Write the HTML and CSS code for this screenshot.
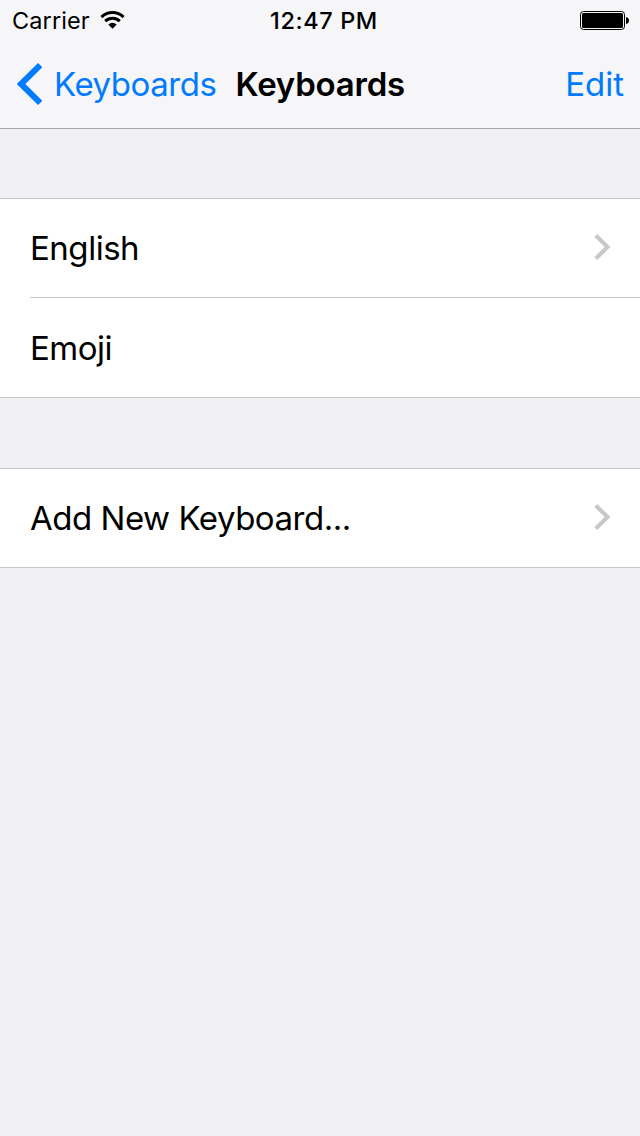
FILE: index.html
```html
<!DOCTYPE html>
<html lang="en">
<head>
<meta charset="utf-8">
<title>Keyboards</title>
<link rel="stylesheet" href="styles.css">
</head>
<body>
<header class="top">
  <div class="status">
    <div class="status-left">
      <span class="carrier">Carrier</span>
      <svg class="wifi" width="25" height="18" viewBox="0 0 25 18"><path d="M1.4 6.2Q6.2 1.6 12.5 1.6T23.6 6.2" fill="none" stroke="#000" stroke-width="3"/><path d="M5.2 10.2Q8.4 7.3 12.5 7.3T19.8 10.2" fill="none" stroke="#000" stroke-width="3"/><path d="M8.3 13.5Q12.5 9.8 16.7 13.5L12.5 17.8Z"/></svg>
    </div>
    <span class="time">12:47 PM</span>
    <svg class="battery" width="50" height="19" viewBox="0 0 50 19"><rect x=".5" y=".5" width="44" height="18" rx="3" fill="none" stroke="#000"/><rect x="2" y="2" width="41" height="15" rx="1.5"/><path d="M46 6Q49 6.5 49 9.5T46 13Z"/></svg>
  </div>
  <nav class="nav">
    <a class="back"><svg class="back-icon" width="26" height="42" viewBox="0 0 26 42"><path d="M23.2 2.2L4 21L23.2 39.8" fill="none" stroke="#007aff" stroke-width="6"/></svg><span class="back-label">Keyboards</span></a>
    <h1 class="title">Keyboards</h1>
    <a class="edit">Edit</a>
  </nav>
</header>
<main class="content">
  <section class="group">
    <div class="row"><span class="label">English</span><svg class="chevron" width="17" height="26" viewBox="0 0 17 26"><path d="M1.8 1.5L13.6 13L1.8 24.5" fill="none" stroke="#c7c7cc" stroke-width="4"/></svg></div>
    <div class="row divided"><span class="label">Emoji</span></div>
  </section>
  <section class="group">
    <div class="row"><span class="label">Add New Keyboard...</span><svg class="chevron" width="17" height="26" viewBox="0 0 17 26"><path d="M1.8 1.5L13.6 13L1.8 24.5" fill="none" stroke="#c7c7cc" stroke-width="4"/></svg></div>
  </section>
</main>
</body>
</html>
```
FILE: styles.css
```css
* { box-sizing: border-box; }
body { margin: 0; min-height: 1136px; background: #efeff4; color: #000; font-family: Inter, "Liberation Sans", sans-serif; }
svg { display: block; flex: none; }
span, h1, a { white-space: nowrap; }
.top { height: 129px; background: #f6f6f8; border-bottom: 1px solid #a7a7aa; }
.status { height: 41px; display: grid; grid-template-columns: 1fr auto 1fr; align-items: center; padding: 0 10px 0 12px; font-size: 23.5px; line-height: 41px; }
.status-left { display: flex; align-items: center; gap: 10px; }
.carrier { letter-spacing: .1px; }
.wifi { margin-top: -1px; }
.time { padding-left: 6px; font-weight: 550; font-size: 23.5px; letter-spacing: .6px; }
.battery { justify-self: end; }
.nav { height: 87px; display: flex; align-items: center; padding: 0 16px 1px 17px; font-size: 33px; line-height: 86px; letter-spacing: -.45px; }
.back { display: flex; align-items: center; gap: 11px; color: #007aff; }
.back-icon { margin-top: -1px; }
.title { margin: 0 0 0 19px; font-size: 33px; font-weight: 600; letter-spacing: -.2px; }
.edit { margin-left: auto; color: #007aff; letter-spacing: 0; }
.content { padding-top: 69px; display: flex; flex-direction: column; gap: 70px; }
.group { background: #fff; border-top: 1px solid #c8c7cc; border-bottom: 1px solid #c8c7cc; }
.row { height: 98px; margin-left: 30px; padding-right: 29px; display: flex; align-items: center; justify-content: space-between; font-size: 33px; letter-spacing: -.48px; }
.label { padding-bottom: 1px; }
.chevron { margin-top: -2px; }
.divided { height: 100px; border-top: 1px solid #c8c7cc; }
.divided .label { padding: 1px 0 0; }
```
